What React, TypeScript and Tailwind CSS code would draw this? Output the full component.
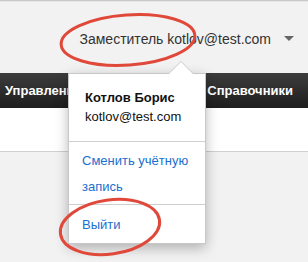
export default function App() {
  return (
    <div
      className="relative w-[308px] h-[262px] overflow-hidden bg-[#f2f2f2] flex flex-col"
      style={{ fontFamily: '"Liberation Sans", Arial, sans-serif' }}
    >
      {/* top rule */}
      <div className="h-[2px] bg-[#c8c8c8] border-b border-[#e6e6e6]" />

      {/* header */}
      <div className="h-[71px] flex items-start justify-end pt-[29px] pr-[14px]">
        <span className="text-[14px] text-[#333] leading-[16px]">Заместитель kotlov@test.com</span>
        <span className="ml-[13px] mt-[5px] w-0 h-0 border-l-[5px] border-r-[5px] border-t-[5px] border-l-transparent border-r-transparent border-t-[#666]" />
      </div>

      {/* nav bar */}
      <div className="h-[35px] bg-gradient-to-b from-[#3d3d3d] to-[#1e1e1e] flex items-center justify-between px-[5px]">
        <span className="text-[13px] font-bold text-white">Управление</span>
        <span className="text-[13px] font-bold text-white mr-[10px]">Справочники</span>
      </div>

      {/* content strip */}
      <div className="h-[44px] bg-white border-b border-[#d0d0d0]" />
      <div className="flex-1 bg-[#f2f2f2]" />

      {/* account popup */}
      <div className="absolute left-[68px] top-[73px] w-[138px] bg-white border border-[#c8c8c8] shadow-[0_4px_12px_rgba(0,0,0,0.28)]">
        {/* arrow */}
        <div className="absolute -top-[13px] left-[99px] w-0 h-0 border-l-[13px] border-r-[13px] border-b-[13px] border-l-transparent border-r-transparent border-b-[#c8c8c8]" />
        <div className="absolute -top-[12px] left-[100px] w-0 h-0 border-l-[12px] border-r-[12px] border-b-[12px] border-l-transparent border-r-transparent border-b-white" />

        <div className="px-[16px] pt-[14px] pb-[15px] text-[13px] text-[#111] leading-[19px]">
          <div className="font-bold">Котлов Борис</div>
          <div>kotlov@test.com</div>
        </div>
        <div className="border-t border-[#cfcfcf] px-[13px] pt-[6px] pb-[4px] text-[13px] leading-[26px] text-[#1a6fd0]">
          Сменить учётную запись
        </div>
        <div className="border-t border-[#cfcfcf] px-[13px] pt-[9px] pb-[7px] text-[13px] leading-[22px] text-[#1a6fd0]">
          Выйти
        </div>
      </div>

      {/* red annotation marks */}
      <svg className="absolute left-0 top-0 pointer-events-none" width="308" height="262">
        <ellipse cx="128" cy="40" rx="67" ry="25" transform="rotate(-4 128 40)" fill="none" stroke="#e0483a" strokeWidth="3" />
        <ellipse cx="110" cy="227" rx="50" ry="27" transform="rotate(-8 110 227)" fill="none" stroke="#e0483a" strokeWidth="3" />
      </svg>
    </div>
  )
}
